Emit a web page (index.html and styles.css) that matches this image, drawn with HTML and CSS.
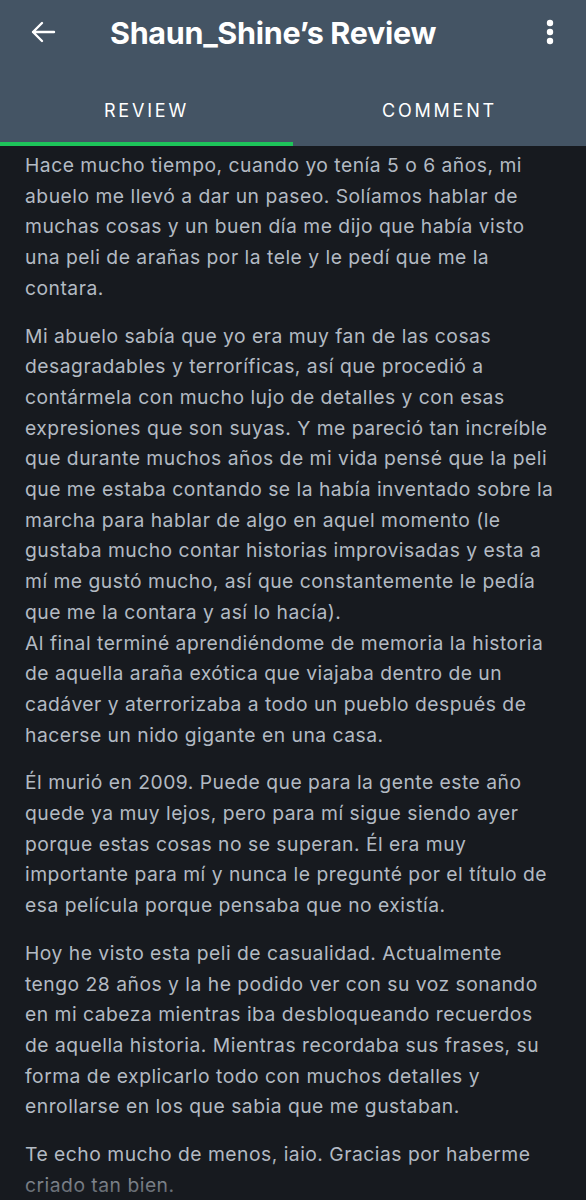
FILE: index.html
```html
<!DOCTYPE html>
<html lang="es">
<head>
<meta charset="utf-8">
<link rel="stylesheet" href="styles.css">
</head>
<body>
<header class="appbar">
  <div class="toolbar">
    <button class="icon-btn back" aria-label="Back">
      <svg width="26" height="22" viewBox="0 0 26 22"><path d="M24 11H3M12 2L3 11l9 9" fill="none" stroke="#fff" stroke-width="2.4" stroke-linecap="round" stroke-linejoin="round"/></svg>
    </button>
    <h1 class="title">Shaun_Shine’s Review</h1>
    <button class="icon-btn more" aria-label="More">
      <svg width="8" height="26" viewBox="0 0 8 26"><circle cx="4" cy="4" r="3.2" fill="#fff"/><circle cx="4" cy="13" r="3.2" fill="#fff"/><circle cx="4" cy="22" r="3.2" fill="#fff"/></svg>
    </button>
  </div>
  <nav class="tabs">
    <div class="tab active">REVIEW</div>
    <div class="tab">COMMENT</div>
  </nav>
</header>
<main class="review">
  <p>Hace mucho tiempo, cuando yo tenía 5 o 6 años, mi<br>abuelo me llevó a dar un paseo. Solíamos hablar de<br>muchas cosas y un buen día me dijo que había visto<br>una peli de arañas por la tele y le pedí que me la<br>contara.</p>
  <p>Mi abuelo sabía que yo era muy fan de las cosas<br>desagradables y terroríficas, así que procedió a<br>contármela con mucho lujo de detalles y con esas<br>expresiones que son suyas. Y me pareció tan increíble<br>que durante muchos años de mi vida pensé que la peli<br>que me estaba contando se la había inventado sobre la<br>marcha para hablar de algo en aquel momento (le<br>gustaba mucho contar historias improvisadas y esta a<br>mí me gustó mucho, así que constantemente le pedía<br>que me la contara y así lo hacía).<br>Al final terminé aprendiéndome de memoria la historia<br>de aquella araña exótica que viajaba dentro de un<br>cadáver y aterrorizaba a todo un pueblo después de<br>hacerse un nido gigante en una casa.</p>
  <p>Él murió en 2009. Puede que para la gente este año<br>quede ya muy lejos, pero para mí sigue siendo ayer<br>porque estas cosas no se superan. Él era muy<br>importante para mí y nunca le pregunté por el título de<br>esa película porque pensaba que no existía.</p>
  <p>Hoy he visto esta peli de casualidad. Actualmente<br>tengo 28 años y la he podido ver con su voz sonando<br>en mi cabeza mientras iba desbloqueando recuerdos<br>de aquella historia. Mientras recordaba sus frases, su<br>forma de explicarlo todo con muchos detalles y<br>enrollarse en los que sabia que me gustaban.</p>
  <p>Te echo mucho de menos, iaio. Gracias por haberme<br>criado tan bien.</p>
</main>
<div class="fade"></div>
</body>
</html>
```

FILE: styles.css
```css
* { box-sizing: border-box; }
html, body { margin: 0; padding: 0; }
body {
  position: relative;
  background: #171a1f;
  font-family: Inter, "Noto Sans", sans-serif;
  width: 586px;
  height: 1200px;
  overflow: hidden;
}
.appbar {
  background: #445464;
}
.toolbar {
  display: flex;
  align-items: center;
  height: 64px;
  padding: 0 26px 0 30px;
}
.icon-btn {
  background: none;
  border: 0;
  padding: 0;
  display: flex;
  align-items: center;
}
.back { width: 80px; }
.title {
  flex: 1;
  margin: 0;
  color: #fff;
  font-size: 30.5px;
  font-weight: 700;
  letter-spacing: -0.3px;
}
.more { width: 20px; justify-content: center; }
.tabs {
  display: flex;
  height: 82px;
}
.tab {
  flex: 1;
  display: flex;
  align-items: center;
  justify-content: center;
  color: #fff;
  font-size: 18px;
  letter-spacing: 2.8px;
  padding-top: 14px;
  border-bottom: 4px solid transparent;
}
.tab.active { border-bottom-color: #1ec45a; }
.review {
  padding: 4px 4px 0 25px;
  color: #b3bac3;
  font-size: 19.3px;
  letter-spacing: 0.5px;
  line-height: 30.7px;
  white-space: nowrap;
}
.review p { margin: 0 0 17px; }
.fade {
  position: absolute;
  left: 0; right: 0; bottom: 0;
  height: 42px;
  background: linear-gradient(to bottom, rgba(23,26,31,0), rgba(23,26,31,0.6));
}
```
